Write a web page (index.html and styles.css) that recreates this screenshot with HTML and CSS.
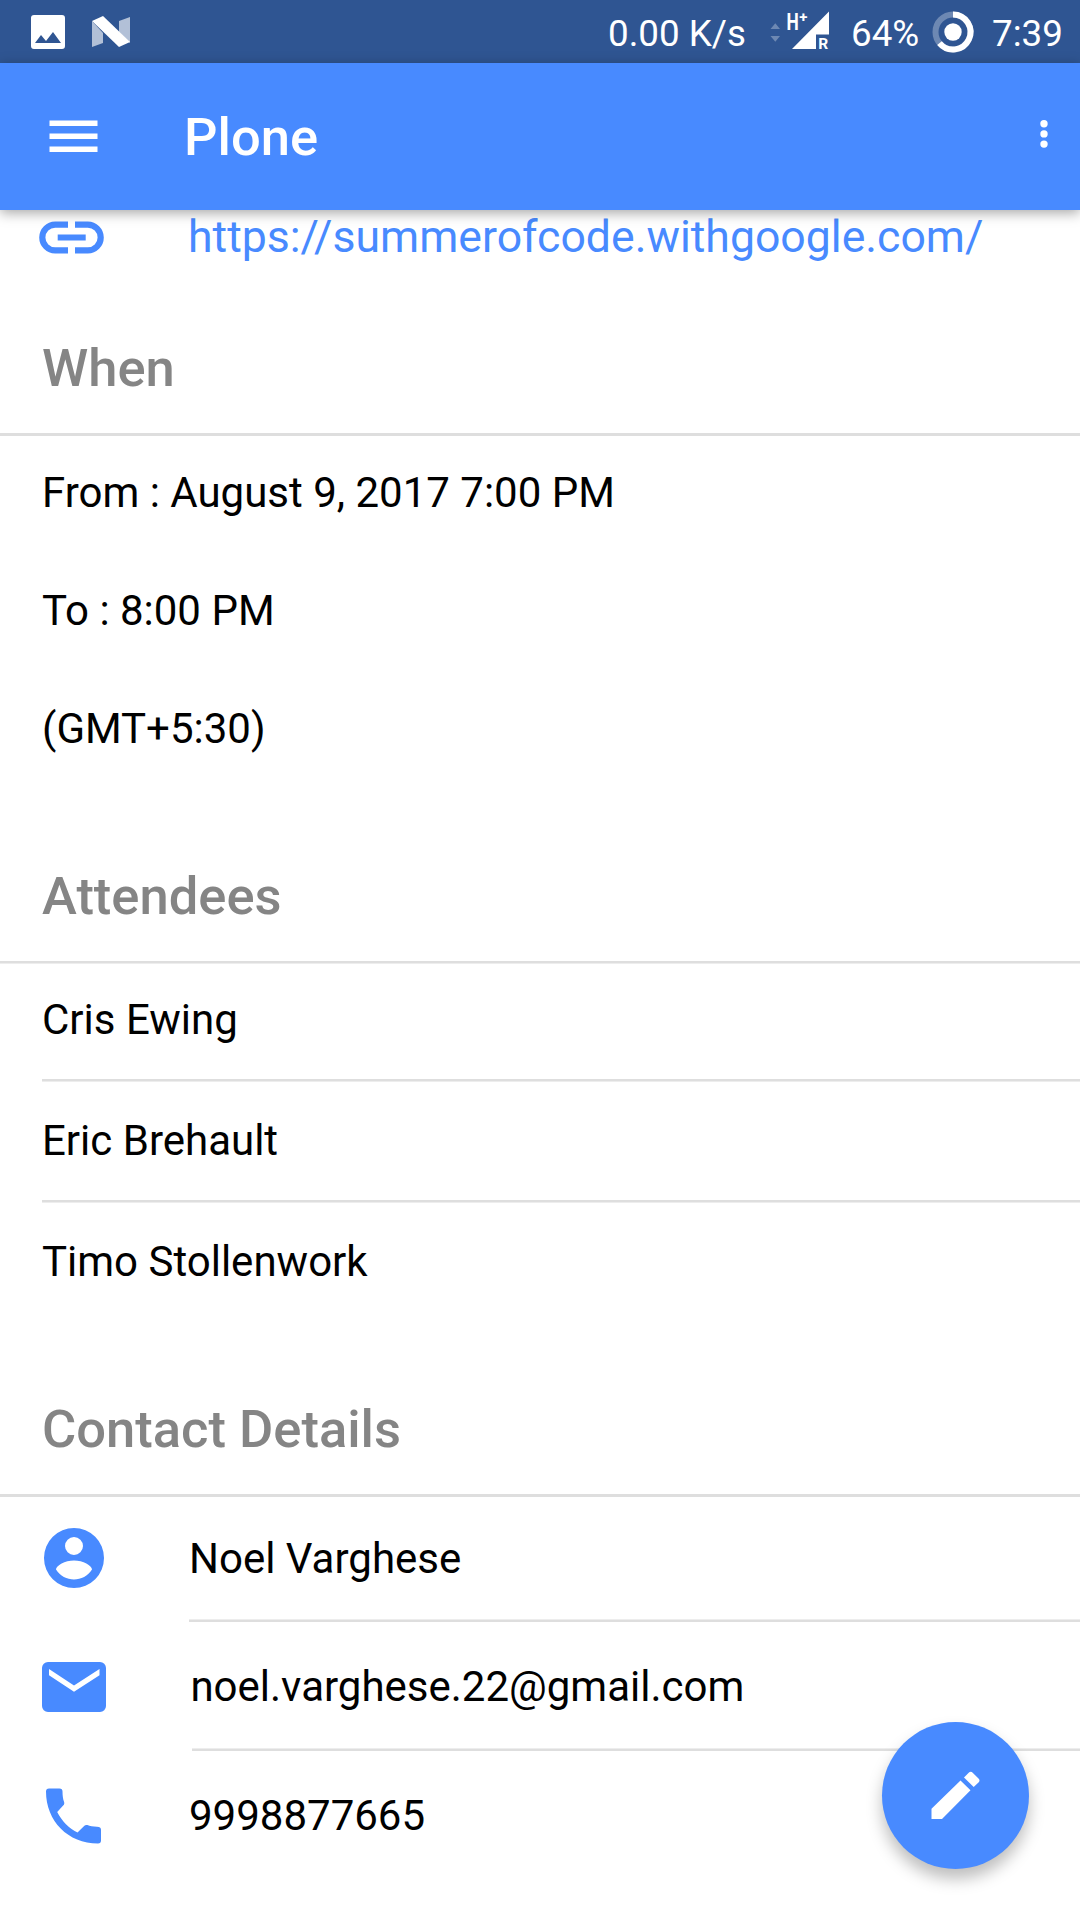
FILE: index.html
```html
<!DOCTYPE html>
<html lang="en">
<head>
<meta charset="utf-8">
<title>Plone</title>
<link rel="stylesheet" href="styles.css">
</head>
<body>
<div class="statusbar">
  <svg class="icon-image" width="36" height="36" viewBox="0 0 36 36"><path fill="#fff" fill-rule="evenodd" d="M4 1h28a3 3 0 0 1 3 3v28a3 3 0 0 1-3 3H4a3 3 0 0 1-3-3V4a3 3 0 0 1 3-3zM5 29h26l-8-11-7 9-5-6z"/></svg>
  <svg class="icon-n" width="40" height="34" viewBox="0 0 40 34"><path fill="#fff" fill-opacity=".63" d="M1 6l11 12v10L1 32zM28 6l11-4v26L28 17z"/><path fill="#fff" d="M1 6l11-5 27 26-11 5z"/></svg>
  <span class="speed">0.00 K/s</span>
  <svg class="icon-signal" width="62" height="42" viewBox="0 0 62 42">
    <path fill="#fff" fill-opacity=".3" d="M1.500 21l4.800-5.700L11 21zM1.500 28H11l-4.700 5.700z"/>
    <path fill="#fff" d="M60 3.500v23H47V41H23z"/>
    <text class="net" transform="translate(17.500 22) scale(.74 1)">H</text>
    <text class="plus" x="30.200" y="13.500">+</text>
    <text class="roam" x="49.200" y="40.500">R</text>
  </svg>
  <span class="battery">64%</span>
  <svg class="icon-battery" width="42" height="42" viewBox="0 0 42 42"><circle cx="21" cy="21" r="17.500" fill="none" stroke="#fff" stroke-opacity=".3" stroke-width="6"/><path fill="none" stroke="#fff" stroke-width="6" d="M21 3.500A17.500 17.500 0 1 1 7.500 32.150"/><circle cx="21" cy="21" r="8.700" fill="#fff"/></svg>
  <span class="clock">7:39</span>
</div>
<header class="appbar">
  <svg class="menu" width="49" height="33" viewBox="0 0 49 33"><path fill="#fff" d="M.5.500h48v5.500H.5zM.5 13.500h48V19H.5zM.5 26.500h48V32H.5z"/></svg>
  <h1 class="title">Plone</h1>
  <svg class="more" width="8" height="28" viewBox="0 0 8 28"><g fill="#fff"><circle cx="4" cy="3.700" r="3.700"/><circle cx="4" cy="13.900" r="3.700"/><circle cx="4" cy="24.100" r="3.700"/></g></svg>
</header>
<main class="content">
  <div class="link-row">
    <svg class="link-icon" width="65" height="33" viewBox="0 0 65 33"><g fill="none" stroke="#488aff" stroke-width="6.200"><path d="M29 3.600H16.200a12.900 12.900 0 0 0 0 25.800H29M36 3.600h12.800a12.900 12.900 0 0 1 0 25.800H36M18.700 16.500h28"/></g></svg>
    <a class="link">https://summerofcode.withgoogle.com/</a>
  </div>
  <section class="when">
    <h2 class="heading">When</h2>
    <p class="time">From : August 9, 2017 7:00 PM</p>
    <p class="time">To : 8:00 PM</p>
    <p class="time">(GMT+5:30)</p>
  </section>
  <section class="attendees">
    <h2 class="heading">Attendees</h2>
    <ul class="list">
      <li class="person">Cris Ewing</li>
      <li class="person">Eric Brehault</li>
      <li class="person">Timo Stollenwork</li>
    </ul>
  </section>
  <section class="contact">
    <h2 class="heading">Contact Details</h2>
    <div class="detail user">
      <svg class="detail-icon" width="66" height="60" viewBox="0 0 66 60"><path fill="#488aff" fill-rule="evenodd" d="M32 0a30 30 0 1 0 0 60a30 30 0 1 0 0-60zM32 9a9 9 0 1 1 0 18a9 9 0 1 1 0-18zM14 41.500c0-4 9-9 18-9s18 5 18 9C46 48 39 51.500 32 51.500S18 48 14 41.500z"/></svg>
      <span class="value">Noel Varghese</span>
    </div>
    <div class="detail mail">
      <svg class="detail-icon" width="66" height="52" viewBox="0 0 66 52"><path fill="#488aff" fill-rule="evenodd" d="M6 1h52a6 6 0 0 1 6 6v38a6 6 0 0 1-6 6H6a6 6 0 0 1-6-6V7a6 6 0 0 1 6-6zM7 8v6.200l25 16.500 25.500-16.500V8L32 24.500z"/></svg>
      <span class="value">noel.varghese.22@gmail.com</span>
    </div>
    <div class="detail phone">
      <svg class="detail-icon" width="66" height="56" viewBox="0 0 66 56"><path fill="#488aff" d="M7 .500h10.500c2 0 3 1 3 3 0 4 .5 7.500 1.600 10.500.4 1.300.2 2.500-.7 3.300L15.200 24c4.500 9 11.500 16 20.300 20.500l6.900-6.800c.8-.8 1.800-1 3-.6 2.500.9 5.500 1.600 9.600 1.600q4 0 4 3V52.500c0 2-1 3-3 3C26 55.500 4 33 4 3.500c0-2 1-3 3-3z"/></svg>
      <span class="value">9998877665</span>
    </div>
  </section>
</main>
<button class="fab" aria-label="Edit"><svg width="49" height="49" viewBox="0 0 49 49"><path fill="#fff" d="M.5 48V37.800L29.500 9.500l10 9.800L11 48zM33 6.500l4.700-4.700q2-2 4 0L47.500 7.500q2 2 0 4L42.700 16z"/></svg></button>
</body>
</html>
```

FILE: styles.css
```css
* { box-sizing: border-box; }

body {
  margin: 0;
  width: 1080px;
  height: 1920px;
  overflow: hidden;
  background: #fff;
  color: #000;
  font-family: Roboto, sans-serif;
  font-size: 42px;
}

h1, h2, p, ul { margin: 0; padding: 0; font-weight: 500; }
p, ul { font-weight: 400; }
svg { display: block; flex: none; overflow: visible; }

.statusbar {
  display: flex;
  align-items: center;
  height: 63px;
  padding-left: 30px;
  background: #2f5592;
  color: #fff;
  font-size: 36.75px;
  line-height: 63px;
  white-space: nowrap;
}
.statusbar span { padding-top: 4px; }
.icon-n { margin-left: 25px; }
.speed { width: 140px; margin-left: 477px; }
.icon-signal { margin: -5px 0 0 21px; }
.net { fill: #fff; font: 700 23.5px Roboto, sans-serif; }
.plus { fill: #fff; font: 700 15px Roboto, sans-serif; }
.roam { fill: #fff; font: 700 15.5px Roboto, sans-serif; }
.battery { width: 68px; margin-left: 20px; }
.icon-battery { margin-left: 13px; }
.clock { margin-left: 18px; }

.appbar {
  position: relative;
  display: flex;
  align-items: center;
  height: 147px;
  padding: 0 32px 0 49px;
  background: #488aff;
  color: #fff;
  box-shadow: 0 3px 12px rgba(0, 0, 0, .35);
}
.title { flex: 1; margin-left: 86px; padding-top: 1px; font-size: 52.5px; line-height: 147px; }
.more { margin-top: -6px; }

.link-row { display: flex; height: 53px; padding-left: 39px; }
.link-icon { margin-top: 11px; }
.link { margin-left: 84px; color: #488aff; font-size: 44.6px; line-height: 54px; }

.heading {
  padding-left: 42px;
  border-bottom: 3px solid #dedede;
  color: #858585;
  font-size: 52.5px;
}
.when .heading { height: 173px; line-height: 210px; }
.attendees .heading {
  height: 173px;
  margin-bottom: 1px;
  border-bottom-width: 2px;
  box-shadow: 0 1px #ededed;
  line-height: 212px;
}
.contact .heading { height: 176px; line-height: 216px; }

.time { height: 118px; padding-left: 42px; line-height: 113px; }

.list { list-style: none; padding-left: 42px; }
.person {
  height: 120px;
  margin-bottom: 1px;
  border-bottom: 2px solid #dedede;
  box-shadow: 0 1px #ededed;
  line-height: 117px;
}
.person:first-child { height: 117px; line-height: 111px; }
.person:last-child { height: 118px; margin-bottom: 0; border-bottom: 0; box-shadow: none; }

.detail { display: flex; align-items: center; height: 129px; padding-left: 42px; }
.value {
  flex: 1;
  height: 100%;
  margin-left: 81px;
  border-bottom: 2px solid #dedede;
  box-shadow: inset 0 -1px #ededed;
  line-height: 129px;
}
.user { height: 125px; }
.user .detail-icon { margin-top: -3px; }
.user .value { line-height: 123px; }
.mail .value { margin-left: 84px; text-indent: -1.600px; }
.phone .value { border-bottom: 0; box-shadow: none; }

.fab {
  position: absolute;
  left: 882px;
  top: 1722px;
  display: grid;
  place-items: center;
  width: 147px;
  height: 147px;
  padding: 0;
  border: 0;
  border-radius: 50%;
  background: #488aff;
  box-shadow: 0 10px 16px rgba(0, 0, 0, .26);
}
```
